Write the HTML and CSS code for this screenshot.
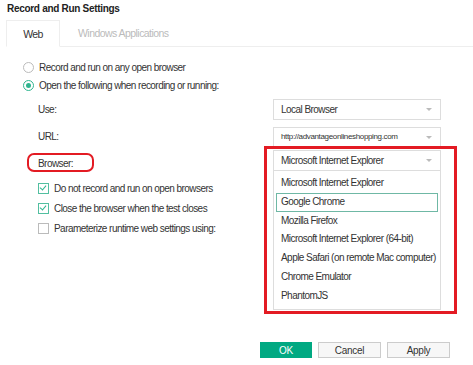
FILE: index.html
```html
<!DOCTYPE html>
<html lang="en">
<head>
    <meta charset="UTF-8">
    <title>Record and Run Settings</title>
    <link rel="stylesheet" href="styles.css">
</head>
<body>
    <h1 class="title">Record and Run Settings</h1>
    <div class="tabs">
        <div class="tab active">Web</div>
        <div class="tab">Windows Applications</div>
    </div>

    <div class="options">
        <label class="radio-row"><span class="radio"></span>Record and run on any open browser</label>
        <label class="radio-row"><span class="radio checked"></span>Open the following when recording or running:</label>
    </div>

    <div class="form">
        <div class="form-row use-row">
            <span class="label">Use:</span>
            <div class="select">Local Browser<span class="arrow"></span></div>
        </div>
        <div class="form-row url-row">
            <span class="label">URL:</span>
            <div class="select small">http://advantageonlineshopping.com<span class="arrow"></span></div>
        </div>
        <div class="form-row browser-row">
            <span class="label marked">Browser:</span>
            <div class="select-wrap">
                <div class="select">Microsoft Internet Explorer<span class="arrow"></span></div>
                <ul class="dropdown">
                    <li>Microsoft Internet Explorer</li>
                    <li class="focused">Google Chrome</li>
                    <li>Mozilla Firefox</li>
                    <li>Microsoft Internet Explorer (64-bit)</li>
                    <li>Apple Safari (on remote Mac computer)</li>
                    <li>Chrome Emulator</li>
                    <li>PhantomJS</li>
                </ul>
            </div>
        </div>
    </div>

    <div class="checks">
        <label class="check-row"><span class="checkbox checked"></span>Do not record and run on open browsers</label>
        <label class="check-row"><span class="checkbox checked"></span>Close the browser when the test closes</label>
        <label class="check-row"><span class="checkbox"></span>Parameterize runtime web settings using:</label>
    </div>

    <div class="buttons">
        <button class="btn primary">OK</button>
        <button class="btn">Cancel</button>
        <button class="btn">Apply</button>
    </div>
</body>
</html>
```

FILE: styles.css
```css
body {
    margin: 0;
    width: 473px;
    height: 365px;
    position: relative;
    background-color: #fff;
    font-family: "Liberation Sans", Arial, sans-serif;
    font-size: 10px;
    letter-spacing: -0.55px;
    color: #333;
    overflow: hidden;
    white-space: nowrap;
}
.title {
    margin: 0;
    padding: 3px 0 0 7px;
    height: 17px;
    font-size: 10px;
    font-weight: bold;
    letter-spacing: -0.3px;
    color: #222;
}
.tabs {
    display: flex;
    margin-left: 6px;
    height: 26px;
    border-bottom: 1px solid #eee;
}
.tab {
    padding: 0 18px;
    line-height: 26px;
    color: #bbb;
    font-size: 10.5px;
}
.tab.active {
    width: 54px;
    padding: 0;
    box-sizing: border-box;
    text-align: center;
    color: #333;
    border: 1px solid #eee;
    border-bottom: 1px solid #fff;
    margin-bottom: -1px;
    height: 27px;
}
.options {
    padding: 11px 0 0 23px;
}
.radio-row {
    display: flex;
    align-items: center;
    height: 18px;
}
.radio {
    width: 9px;
    height: 9px;
    border: 1px solid #bbb;
    border-radius: 50%;
    margin-right: 5px;
    position: relative;
}
.radio.checked {
    border-color: #2fb58f;
}
.radio.checked::after {
    content: "";
    position: absolute;
    left: 2px;
    top: 2px;
    width: 5px;
    height: 5px;
    border-radius: 50%;
    background-color: #2fb58f;
}
.form {
    padding: 5px 0 0 38px;
}
.form-row {
    display: flex;
    align-items: center;
    height: 21px;
}
.use-row {
    margin-bottom: 7px;
}
.url-row {
    margin-bottom: 3px;
    height: 20px;
}
.label {
    width: 235px;
    line-height: 12px;
}
.label.marked {
    position: relative;
    top: 3px;
}
.label.marked::before {
    content: "";
    position: absolute;
    left: -11px;
    top: -5px;
    width: 63px;
    height: 15px;
    border: 2px solid #e31b23;
    border-radius: 7px;
}
.select {
    position: relative;
    width: 168px;
    height: 100%;
    box-sizing: border-box;
    border: 1px solid #ddd;
    padding-left: 7px;
    line-height: 19px;
    background: #fff;
}
.select.small {
    font-size: 8px;
    letter-spacing: -0.35px;
    line-height: 18px;
}
.arrow {
    position: absolute;
    right: 8px;
    top: 8px;
    border-left: 3px solid transparent;
    border-right: 3px solid transparent;
    border-top: 3px solid #bbb;
}
.select-wrap {
    position: relative;
    height: 21px;
}
.select-wrap::before {
    content: "";
    position: absolute;
    left: -9px;
    top: -4px;
    width: 187px;
    height: 162px;
    border: 3px solid #e31b23;
}
.dropdown {
    position: absolute;
    left: 0;
    top: 21px;
    width: 168px;
    box-sizing: border-box;
    margin: 0;
    padding: 3px 2px 3px;
    list-style: none;
    background: #fff;
    border: 1px solid #ddd;
    border-top: none;
}
.dropdown li {
    height: 18.8px;
    line-height: 18.8px;
    padding-left: 5px;
    box-sizing: border-box;
}
.dropdown li.focused {
    border: 1px solid #6fb8a5;
    line-height: 16.8px;
    padding-left: 4px;
}
.checks {
    padding: 7px 0 0 38px;
}
.check-row {
    display: flex;
    align-items: center;
    height: 20px;
}
.checkbox {
    width: 9px;
    height: 9px;
    border: 1px solid #bbb;
    margin-right: 5px;
    position: relative;
}
.checkbox.checked {
    border-color: #52bfa0;
}
.checkbox.checked::after {
    content: "";
    position: absolute;
    left: 2px;
    top: 0px;
    width: 3px;
    height: 5px;
    border-right: 1.5px solid #2fb58f;
    border-bottom: 1.5px solid #2fb58f;
    transform: rotate(40deg);
}
.buttons {
    position: absolute;
    left: 260px;
    top: 342px;
    display: flex;
    gap: 6px;
}
.btn {
    height: 16px;
    width: 63px;
    padding: 0;
    font-family: "Liberation Sans", Arial, sans-serif;
    font-size: 10px;
    letter-spacing: -0.3px;
    color: #333;
    background: #f7f7f7;
    border: 1px solid #ccc;
}
.btn.primary {
    width: 52px;
    background: #01a982;
    border-color: #01a982;
    color: #fff;
}
```
